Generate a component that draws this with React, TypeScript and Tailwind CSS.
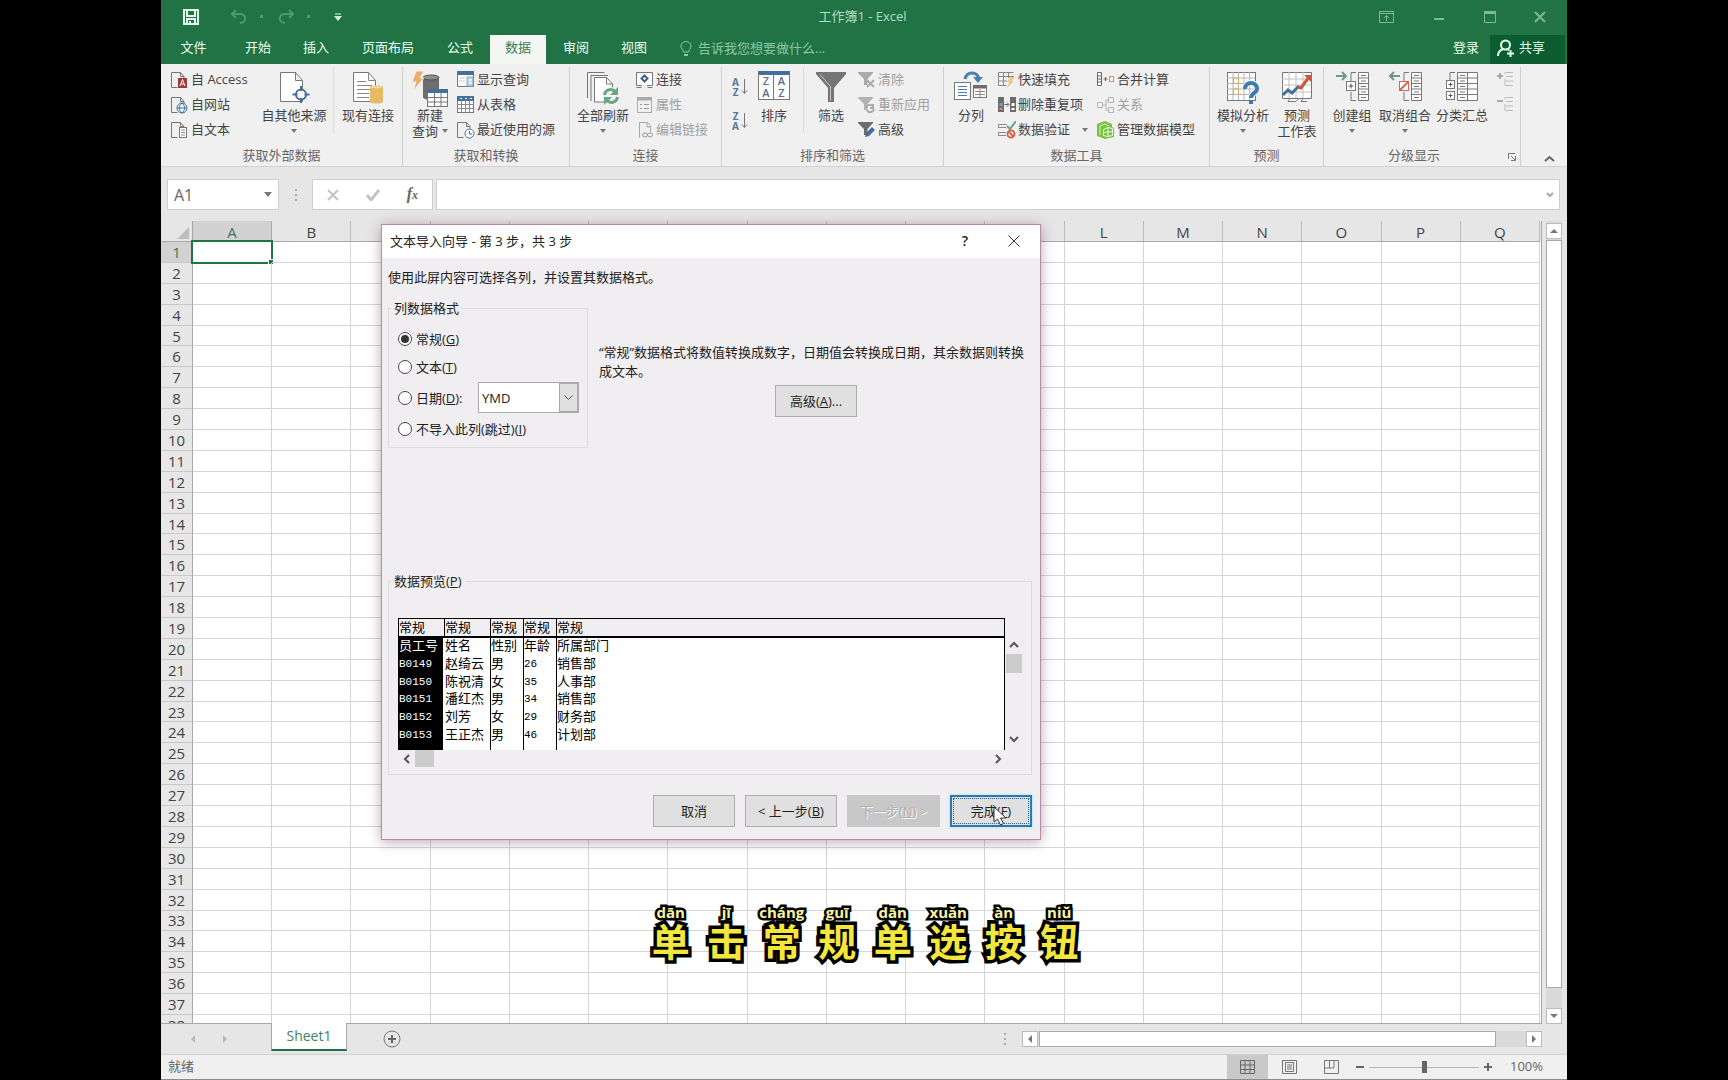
import React from "react";

type Kids = { children?: React.ReactNode };

/* ---------- icon helpers ---------- */

function Icon({ w = 18, h = 18, children }: Kids & { w?: number; h?: number }) {
  return (
    <svg width={w} height={h} viewBox={`0 0 ${w} ${h}`} fill="none" aria-hidden="true" className="block shrink-0">
      {children}
    </svg>
  );
}

function Caret() {
  return (
    <Icon w={6} h={4}>
      <path d="M0 0h6L3 4z" fill="#777" />
    </Icon>
  );
}

const SmallPage = ({ children }: Kids) => (
  <Icon>
    <path d="M9.500 1.500H0.500v15h6M9.500 1.500l3.500 4v2M9.500 1.500v4h3.500" stroke="#777" />
    {children}
  </Icon>
);

const AccessIcon = () => (
  <SmallPage>
    <rect x="7" y="7" width="9" height="10" fill="#a4373a" />
    <path d="M9 15l2.500-6.500L14 15M10 13h3" stroke="#fff" />
  </SmallPage>
);
const WebIcon = () => (
  <SmallPage>
    <circle cx="11" cy="12" r="5" fill="#eef4fa" stroke="#3e7298" />
    <path d="M6 12h10M11 7c-3.500 3-3.500 7 0 10c3.500-3 3.500-7 0-10" stroke="#3e7298" />
  </SmallPage>
);
const TextIcon = () => (
  <SmallPage>
    <rect x="8.500" y="6.500" width="7" height="10" fill="#fff" stroke="#777" />
    <path d="M10 9h4M10 11.500h4M10 14h4" stroke="#888" />
  </SmallPage>
);
const RecentIcon = () => (
  <SmallPage>
    <circle cx="12.500" cy="12.500" r="4.500" fill="#fff" stroke="#4a7296" />
    <path d="M12.500 10v3h2.500" stroke="#4a7296" />
  </SmallPage>
);
const OtherSourceIcon = () => (
  <Icon w={32} h={34}>
    <path d="M2.500 1.500h15l7 8v21h-22z" fill="#fff" stroke="#777" />
    <path d="M17.500 1.500v8h7" stroke="#777" />
    <circle cx="23" cy="23.500" r="5" fill="#fff" stroke="#44709d" strokeWidth="2" />
    <path d="M23 15v5M23 27v5M14.500 23.500h5M26.500 23.500h5" stroke="#44709d" strokeWidth="2" />
  </Icon>
);
const ExistingIcon = () => (
  <Icon w={32} h={34}>
    <path d="M1.500 1.500h15l7 8v21h-22z" fill="#fff" stroke="#777" />
    <path d="M16.500 1.500v8h7M5 10.500h9M5 14.500h15M5 18.500h13M5 22.500h12M5 26.500h12" stroke="#888" />
    <path d="M18 16c0-2 13-2 13 0v15c0 2-13 2-13 0z" fill="#e5bb66" />
    <ellipse cx="24.500" cy="16" rx="6" ry="1.500" fill="#f3d797" />
  </Icon>
);
const NewQueryIcon = () => (
  <Icon w={36} h={36}>
    <path d="M11 6h16v20c0 4-16 4-16 0z" fill="#6d6d6d" />
    <ellipse cx="19" cy="6.500" rx="8" ry="2.500" fill="#8f8f8f" stroke="#555" />
    <path d="M4 0h8L8 7h4L1 20l3-9H0z" fill="#eab06a" stroke="#f1f0f1" />
    <rect x="15.500" y="19.500" width="20" height="16" fill="#fff" stroke="#777" />
    <rect x="15" y="18" width="21" height="4" fill="#44709d" />
    <path d="M15 26.500h21M15 31h21M22.500 22v14M29 22v14" stroke="#777" />
  </Icon>
);
const ShowQueryIcon = () => (
  <Icon>
    <rect x="0.500" y="1.500" width="16" height="14" fill="#fff" stroke="#777" />
    <rect x="0" y="0" width="17" height="4" fill="#44709d" />
    <path d="M2 7h6M2 10h6" stroke="#ccc" />
    <rect x="10" y="6" width="6" height="9" fill="#c5d6e6" stroke="#8aa7c4" />
    <path d="M12 9h3M12 12h3" stroke="#fff" />
  </Icon>
);
const FromTableIcon = () => (
  <Icon>
    <rect x="0.500" y="1.500" width="16" height="15" fill="#fff" stroke="#777" />
    <rect x="0" y="0" width="17" height="5" fill="#44709d" />
    <path d="M0 8.500h17M0 12.500h17M4.500 4v12.500M8.500 4v12.500M12.500 4v12.500" stroke="#888" />
    <path d="M3 2.500h2M8 2.500h2M13 2.500h2" stroke="#fff" />
  </Icon>
);
const RefreshAllIcon = () => (
  <Icon w={34} h={34}>
    <path d="M1.500 27V1.500h17M5 30V4.500h17" stroke="#777" />
    <path d="M8.500 6.500h12l6 6.500v18h-18z" fill="#fff" stroke="#777" />
    <path d="M20.500 6.500V13h6" stroke="#777" />
    <circle cx="25" cy="25" r="9" fill="#f4f4f4" />
    <path d="M18.500 24c1-6 8-7 11-3M31.500 26c-1 6-8 7-11 3" stroke="#6aa583" strokeWidth="3" />
    <path d="M32 16v8h-8zM18 34v-8h8z" fill="#6aa583" />
  </Icon>
);
const ConnIcon = () => (
  <Icon>
    <path d="M0.500 1.500h16v13h-16z" fill="#fff" />
    <path d="M6 14.500H0.500v-13h16v13H11M0.500 16.500h5M11.500 16.500h5" stroke="#777" />
    <path d="M8.500 4.500l3 3-3 3-3-3z" fill="#fff" stroke="#3f6288" strokeWidth="2" />
  </Icon>
);
const PropIcon = () => (
  <Icon>
    <rect x="1.500" y="1.500" width="14" height="15" stroke="#aaa" />
    <path d="M1 3h15" stroke="#aaa" strokeWidth="3" />
    <path d="M4 8.500h2M8 8.500h5M4 12.500h2M8 12.500h5" stroke="#999" />
  </Icon>
);
const LinkIcon = () => (
  <Icon>
    <path d="M4 16.500H3.500v-15h8l3 3.500v6M11 2v4h4" stroke="#aaa" />
    <ellipse cx="9" cy="14" rx="2.500" ry="2" stroke="#999" />
    <ellipse cx="14" cy="14" rx="2.500" ry="2" stroke="#999" />
  </Icon>
);
function AzIcon({ top, bottom }: { top: string; bottom: string }) {
  return (
    <span className="flex items-center gap-[2px]">
      <span className="flex flex-col text-[10px] font-bold leading-[10px] text-[#55779c]">
        <span>{top}</span>
        <span>{bottom}</span>
      </span>
      <Icon w={7} h={18}>
        <path d="M3.500 1v14M1 12.500l2.500 3 2.500-3" stroke="#777" />
      </Icon>
    </span>
  );
}
const SortIcon = () => (
  <span className="grid w-8 grid-cols-2 border border-t-4 border-[#777] border-t-[#44709d] bg-white text-center text-[11px] font-semibold leading-[12px] text-[#5c6f8a]">
    <span className="border-r border-[#777]">
      Z<br />A
    </span>
    <span>
      A<br />Z
    </span>
  </span>
);
const FunnelIcon = () => (
  <Icon w={32} h={34}>
    <path d="M1 1h30v2L19 17v14h-6V17L1 3z" fill="#757575" />
    <path d="M5 3.500l10.500 12v14" stroke="#c9c9c9" />
  </Icon>
);
const funnel = "M0 1h15v1L9.500 8v6h-3.500V8L0 2z";
const ClearIcon = () => (
  <Icon>
    <path d={funnel} fill="#a9a9a9" />
    <path d="M9 9l7 7M16 9l-7 7" stroke="#aaa" strokeWidth="2" />
  </Icon>
);
const ReapplyIcon = () => (
  <Icon>
    <path d={funnel} fill="#b3b3b3" />
    <path d="M8 12c1-4 6-4 7-1M16 13c-1 4-6 4-7 1M15 8v4h-3" stroke="#aaa" strokeWidth="2" />
  </Icon>
);
const AdvIcon = () => (
  <Icon>
    <path d={funnel} fill="#6d6d6d" />
    <path d="M7 16l1-4 6-6 3 3-6 6z" fill="#44709d" />
  </Icon>
);
const SplitIcon = () => (
  <Icon w={34} h={32}>
    <path d="M11 8c2-8 12-8 14 0" stroke="#4a7fb0" strokeWidth="3" />
    <path d="M19 6h10l-5 6z" fill="#4a7fb0" />
    <rect x="0.500" y="11.500" width="16" height="17" fill="#fff" stroke="#777" />
    <path d="M4 15.500h9M4 18.500h9M4 21.500h9M4 24.500h9" stroke="#4a7fb0" />
    <rect x="19.500" y="14.500" width="13" height="12" fill="#fff" stroke="#777" />
    <path d="M19 16h14" stroke="#6d6d6d" strokeWidth="3" />
    <path d="M21 20.500h10M21 23.500h10M26 18v8" stroke="#888" />
  </Icon>
);
const FlashIcon = () => (
  <Icon>
    <path d="M15.500 1.500H0.500v13h8M0 5.500h16M0 10h9M5.500 1v13M10.500 1v6" stroke="#888" />
    <path d="M12 6h5l-3 4h2l-7 7 2-6H9z" fill="#edc98b" />
  </Icon>
);
const DedupIcon = () => (
  <Icon>
    <path d="M0 1h6v15H0zM12 1h6v15h-6z" fill="#6d6d6d" />
    <path d="M1.500 7h3v3h-3z" fill="#6fa0cc" />
    <path d="M1.500 12h3v2h-3z" fill="#dd8a5e" />
    <path d="M13.500 7h3v3h-3zM13.500 12h3v2h-3z" fill="#fff" />
    <path d="M6.500 8.500h4M9 6.500l2 2-2 2" stroke="#666" />
  </Icon>
);
const ValidIcon = () => (
  <Icon>
    <path d="M9 3.500H0.500v3H8M8 11.500H0.500v3H8" stroke="#888" />
    <path d="M9 5l3 3 6-8" stroke="#6aa583" strokeWidth="2" />
    <circle cx="13" cy="13" r="3.500" fill="#fff" stroke="#d0664a" strokeWidth="2" />
    <path d="M10.500 10.500l5 5" stroke="#d0664a" strokeWidth="2" />
  </Icon>
);
const ConsolidateIcon = () => (
  <Icon>
    <path d="M0.500 1.500h4v13h-4zM0.500 5h4M0.500 8h4M0.500 11h4" fill="#fff" stroke="#666" />
    <path d="M6.500 8h4M8.500 6v4" stroke="#666" />
    <rect x="12.500" y="5.500" width="4" height="5" fill="#fff" stroke="#d08a5c" />
  </Icon>
);
const RelationIcon = () => (
  <Icon>
    <path d="M0.500 6.500h5v5h-5zM11.500 1.500h5v5h-5zM11.500 11.500h5v5h-5zM6 9h3V4h2.500M9 9v5h2.500" stroke="#b5b5b5" />
  </Icon>
);
const ModelIcon = () => (
  <Icon>
    <path d="M0 3l8-3 7 3v3l2 1v9l-5 1-4 1-8-3z" fill="#7cc242" />
    <path d="M3 14V5l5-2 4 2" stroke="#d9f0c0" />
    <path d="M6.500 8.500l4-2 5 1v7l-5 1-4-1zM6.500 11.500l9-1M11 7v8" stroke="#eef8e4" />
  </Icon>
);
const WhatIfIcon = () => (
  <Icon w={34} h={34}>
    <rect x="1.500" y="1.500" width="28" height="28" fill="#fff" stroke="#777" />
    <path d="M7 1v28M12.500 1v28M18 1v28M23.500 1v28M1 7h28M1 12.500h28M1 18h28M1 23.500h28" stroke="#b5b5b5" />
    <path d="M7.500 7h5v5.500h-5zM7.500 18h5v5.500h-5z" stroke="#e2a75b" />
    <path d="M19 18c0-8 12-8 12 0c0 4-6 4-6 9" stroke="#f1f1f1" strokeWidth="6" />
    <path d="M19 18c0-8 12-8 12 0c0 4-6 4-6 9" stroke="#3f7cac" strokeWidth="4" />
    <path d="M23 29h4v4h-4z" fill="#3f7cac" />
  </Icon>
);
const ForecastIcon = () => (
  <Icon w={32} h={32}>
    <path d="M1.500 1.500h29v26h-29z" fill="#fff" stroke="#777" />
    <path d="M8 1v26M15 1v26M22 1v26M1 8h29M1 14h29M1 21h29" stroke="#c2c2c2" />
    <path d="M2 24l5-5 4 3 7-7" stroke="#44709d" strokeWidth="3" />
    <path d="M17 16l3 1 8-11" stroke="#c9583e" strokeWidth="3" />
    <path d="M23 4h7v7z" fill="#c9583e" />
    <path d="M2 27.500h7l-2 3h8l3-3h4l-2 3h6" stroke="#777" fill="#fff" />
  </Icon>
);
const sideTable = "M23.500 1.500h10v28h-10zM23.500 7h10M23.500 12.500h10M23.500 18h10M23.500 23.500h10";
const sideMarks = "M26 4.500h5M26 10h5M26 15.500h5M26 21h5M26 26.500h5M21 1.500h-5V10M16 21v8.500h5";
const GroupIcon = () => (
  <Icon w={34} h={32}>
    <path d={sideTable} fill="#fff" stroke="#777" />
    <path d={sideMarks} stroke="#777" />
    <rect x="11.500" y="10.500" width="9" height="9" fill="#fff" stroke="#777" />
    <path d="M13.500 15h5M16 12.500v5" stroke="#555" />
    <path d="M1 5h10M7 1l4 4-4 4" stroke="#6a9a7f" strokeWidth="2" />
  </Icon>
);
const UngroupIcon = () => (
  <Icon w={34} h={32}>
    <path d={sideTable} fill="#fff" stroke="#777" />
    <path d={sideMarks} stroke="#777" />
    <rect x="11.500" y="10.500" width="9" height="9" fill="#fff" stroke="#cf6a4f" />
    <path d="M12 19l8-8" stroke="#cf6a4f" strokeWidth="2" />
    <path d="M2 5h10M6 1L2 5l4 4" stroke="#6a9a7f" strokeWidth="2" />
  </Icon>
);
const SubtotalIcon = () => (
  <Icon w={34} h={32}>
    <path d="M12.500 1.500h20v28h-20zM12.500 7h20M12.500 12.500h20M12.500 18h20M12.500 23.500h20M22.500 1v28" fill="#fff" stroke="#777" />
    <path d="M15 4.500h5M15 10h5M15 15.500h5M15 21h5M15 26.500h5M10 1.500H5V9" stroke="#777" />
    <rect x="1.500" y="9.500" width="8" height="8" fill="#fff" stroke="#777" />
    <rect x="1.500" y="20.500" width="8" height="8" fill="#fff" stroke="#777" />
    <path d="M3.500 13.500h4M5.500 11.500v4M3.500 24.500h4M5.500 22.500v4" stroke="#555" />
  </Icon>
);
const DetailIcon = ({ plus }: { plus?: boolean }) => (
  <Icon w={16} h={16}>
    <path d="M9 1.500h7M9 5.500h7M9 10h7M9 14.500h7M8 1v2M8 8v7" stroke="#bbb" />
    <path d={plus ? "M0 5h6M3 2v6" : "M0 5h6"} stroke="#aaa" strokeWidth="2" />
  </Icon>
);

/* ---------- ribbon parts ---------- */

function Small({ icon, label, dim, arrow }: { icon: React.ReactNode; label: string; dim?: boolean; arrow?: boolean }) {
  return (
    <button type="button" className={`flex h-[25px] items-center gap-[2px] whitespace-nowrap ${dim ? "text-[#a0a0a0]" : "text-[#444]"}`}>
      {icon}
      <span>{label}</span>
      {arrow && (
        <span className="pl-[10px]">
          <Caret />
        </span>
      )}
    </button>
  );
}

function Big({ icon, label, second, arrow, width }: { icon: React.ReactNode; label: string; second?: string; arrow?: boolean; width: string }) {
  return (
    <button type="button" className={`flex shrink-0 flex-col items-center whitespace-nowrap pt-1 text-[#444] ${width}`}>
      <span className="flex h-[36px] items-start">{icon}</span>
      <span className="leading-4">{label}</span>
      <span className="flex h-4 items-center gap-1 leading-4">
        {second}
        {arrow && <Caret />}
      </span>
    </button>
  );
}

function Group({ label, width, children, launcher }: Kids & { label: string; width: string; launcher?: boolean }) {
  return (
    <section aria-label={label} className={`flex shrink-0 flex-col border-r border-[#d0d0d0] ${width}`}>
      <div className="flex h-[80px]">{children}</div>
      <div className="flex h-4 items-center text-[#666]">
        <span className="flex-1 text-center leading-4">{label}</span>
        {launcher && (
          <button type="button" aria-label="分级显示设置" className="mr-1 ml-1 pt-1">
            <Icon w={8} h={8}>
              <path d="M0.500 6V0.500H7M3 3l4 4M7.500 3v4.500H3" stroke="#777" />
            </Icon>
          </button>
        )}
      </div>
    </section>
  );
}

const Col = ({ children, width }: Kids & { width: string }) => <div className={`flex shrink-0 flex-col ${width}`}>{children}</div>;
const Rule = () => <div className="h-[66px] w-px shrink-0 bg-[#dcdcdc]" />;

function Ribbon() {
  return (
    <div className="flex h-[103px] border-b border-[#d2d2d2] bg-[#f1f0f1] pt-[3px] text-[13px]">
      <Group label="获取外部数据" width="w-[242px]">
        <Col width="w-[94px] pl-[10px]">
          <Small icon={<AccessIcon />} label="自 Access" />
          <Small icon={<WebIcon />} label="自网站" />
          <Small icon={<TextIcon />} label="自文本" />
        </Col>
        <Big width="w-[78px]" icon={<OtherSourceIcon />} label="自其他来源" arrow />
        <Rule />
        <Big width="w-[68px]" icon={<ExistingIcon />} label="现有连接" />
      </Group>
      <Group label="获取和转换" width="w-[167px]">
        <Big width="w-[54px]" icon={<NewQueryIcon />} label="新建" second="查询" arrow />
        <Col width="w-[112px]">
          <Small icon={<ShowQueryIcon />} label="显示查询" />
          <Small icon={<FromTableIcon />} label="从表格" />
          <Small icon={<RecentIcon />} label="最近使用的源" />
        </Col>
      </Group>
      <Group label="连接" width="w-[152px]">
        <Big width="w-[66px]" icon={<RefreshAllIcon />} label="全部刷新" arrow />
        <Col width="w-[86px]">
          <Small icon={<ConnIcon />} label="连接" />
          <Small icon={<PropIcon />} label="属性" dim />
          <Small icon={<LinkIcon />} label="编辑链接" dim />
        </Col>
      </Group>
      <Group label="排序和筛选" width="w-[222px]">
        <div className="flex w-8 shrink-0 flex-col items-end gap-[14px] pt-[10px] pr-[6px]">
          <button type="button" aria-label="升序">
            <AzIcon top="A" bottom="Z" />
          </button>
          <button type="button" aria-label="降序">
            <AzIcon top="Z" bottom="A" />
          </button>
        </div>
        <Big width="w-[40px]" icon={<SortIcon />} label="排序" />
        <div className="w-[9px]" />
        <Rule />
        <Big width="w-[54px]" icon={<FunnelIcon />} label="筛选" />
        <Col width="w-[84px]">
          <Small icon={<ClearIcon />} label="清除" dim />
          <Small icon={<ReapplyIcon />} label="重新应用" dim />
          <Small icon={<AdvIcon />} label="高级" />
        </Col>
      </Group>
      <Group label="数据工具" width="w-[266px]">
        <Big width="w-[54px]" icon={<SplitIcon />} label="分列" />
        <Col width="w-[99px]">
          <Small icon={<FlashIcon />} label="快速填充" />
          <Small icon={<DedupIcon />} label="删除重复项" />
          <Small icon={<ValidIcon />} label="数据验证" arrow />
        </Col>
        <Col width="w-[112px]">
          <Small icon={<ConsolidateIcon />} label="合并计算" />
          <Small icon={<RelationIcon />} label="关系" dim />
          <Small icon={<ModelIcon />} label="管理数据模型" />
        </Col>
      </Group>
      <Group label="预测" width="w-[114px]">
        <Big width="w-[66px]" icon={<WhatIfIcon />} label="模拟分析" arrow />
        <Big width="w-[42px]" icon={<ForecastIcon />} label="预测" second="工作表" />
      </Group>
      <Group label="分级显示" width="w-[197px]" launcher>
        <Big width="w-[56px]" icon={<GroupIcon />} label="创建组" arrow />
        <Big width="w-[50px]" icon={<UngroupIcon />} label="取消组合" arrow />
        <Big width="w-[64px]" icon={<SubtotalIcon />} label="分类汇总" />
        <div className="flex flex-col gap-[9px] pt-1 pl-[3px]">
          <button type="button" aria-label="显示明细数据">
            <DetailIcon plus />
          </button>
          <button type="button" aria-label="隐藏明细数据">
            <DetailIcon />
          </button>
        </div>
      </Group>
      <div className="flex flex-1 items-end justify-end pr-[12px] pb-1">
        <button type="button" aria-label="折叠功能区">
          <Icon w={11} h={7}>
            <path d="M1 6l4.500-4L10 6" stroke="#666" strokeWidth="2" />
          </Icon>
        </button>
      </div>
    </div>
  );
}

/* ---------- title bar and tabs ---------- */

function TitleBar() {
  return (
    <header className="grid h-[35px] grid-cols-[1fr_auto_1fr] items-center pb-[2px] text-[13px]">
      <div className="flex items-center pl-[22px]">
        <button type="button" aria-label="保存">
          <Icon w={16} h={16}>
            <path d="M1 1h14v14H1z" stroke="#e3ffed" strokeWidth="2" />
            <path d="M4 1v6h8V1M4 15v-5h8v5M7 12v3" stroke="#e3ffed" strokeWidth="2" />
          </Icon>
        </button>
        <div className="flex items-center gap-[13px] pl-8 text-[#4f9870]">
          <button type="button" aria-label="撤消">
            <Icon w={16} h={16}>
              <path d="M5 1L1 5l4 4M1 5h8c7 0 7 9 0 9" stroke="currentColor" strokeWidth="2" />
            </Icon>
          </button>
          <span className="h-[3px] w-[3px] bg-[#4f9870]" />
          <button type="button" aria-label="恢复" className="pl-[2px]">
            <Icon w={16} h={16}>
              <path d="M11 1l4 4-4 4M15 5H7C0 5 0 14 7 14" stroke="currentColor" strokeWidth="2" />
            </Icon>
          </button>
          <span className="h-[3px] w-[3px] bg-[#4f9870]" />
        </div>
        <button type="button" aria-label="自定义快速访问工具栏" className="pl-6">
          <Icon w={8} h={8}>
            <path d="M1 1h6" stroke="#d6f3e1" />
            <path d="M0 3h8L4 8z" fill="#d6f3e1" />
          </Icon>
        </button>
      </div>
      <h1 className="pr-[3px] text-[#b4dcc3]">工作簿1 - Excel</h1>
      <div className="flex items-center justify-end gap-[38px] pr-[21px] text-[#7fb896]">
        <button type="button" aria-label="功能区显示选项">
          <Icon w={15} h={12}>
            <path d="M0.500 0.500h14v11H0.500zM0 2.500h15M7.500 10V5M5 7l2.500-2.500L10 7" stroke="currentColor" />
          </Icon>
        </button>
        <button type="button" aria-label="最小化" className="px-[2px]">
          <Icon w={10} h={10}>
            <path d="M0 7h10" stroke="currentColor" strokeWidth="2" />
          </Icon>
        </button>
        <button type="button" aria-label="最大化">
          <Icon w={12} h={12}>
            <path d="M0.500 1v10.500h11V1zM0 2h12" stroke="currentColor" />
            <path d="M0 1.500h12" stroke="currentColor" strokeWidth="3" />
          </Icon>
        </button>
        <button type="button" aria-label="关闭">
          <Icon w={12} h={12}>
            <path d="M1 1l10 10M11 1L1 11" stroke="currentColor" strokeWidth="2" />
          </Icon>
        </button>
      </div>
    </header>
  );
}

const tabs = ["开始", "插入", "页面布局", "公式", "数据", "审阅", "视图"];

function Tabs() {
  return (
    <nav className="flex h-[29px] text-[13px] text-[#eafff1]">
      <button type="button" className="mr-1 w-[65px] pb-1">
        文件
      </button>
      <div className="flex gap-[2px]">
        {tabs.map((t) => (
          <button
            key={t}
            type="button"
            className={`pb-1 ${t.length > 2 ? "w-[84px]" : "w-14"} ${t === "数据" ? "bg-[#f3f6f3] text-[#35805a]" : ""}`}
          >
            {t}
          </button>
        ))}
      </div>
      <button type="button" className="flex items-center gap-[6px] pb-px pl-[18px] text-[#8cc7a3]">
        <Icon w={12} h={16}>
          <path d="M3.500 11C3.500 9 1 8 1 5a5 4.500 0 0 1 10 0c0 3-2.500 4-2.500 6zM4 14h4" stroke="currentColor" strokeWidth="1" />
          <path d="M4 13h4v2H4z" fill="currentColor" />
        </Icon>
        告诉我您想要做什么...
      </button>
      <div className="flex-1" />
      <button type="button" className="px-[11px] pb-1">
        登录
      </button>
      <button type="button" className="mr-[2px] flex w-[75px] items-center gap-1 bg-[#0c5c31] pb-[4px] pl-[7px]">
        <Icon w={18} h={18}>
          <circle cx="8.500" cy="6" r="4.500" stroke="currentColor" strokeWidth="2" />
          <path d="M1 17c0-4 2-6 5-7M10 10l2 1M13.500 11v7M10 14.500h7" stroke="currentColor" strokeWidth="2" />
        </Icon>
        共享
      </button>
    </nav>
  );
}

function Grip() {
  return (
    <>
      <i className="h-[2px] w-[2px] bg-[#aaa]" />
      <i className="h-[2px] w-[2px] bg-[#aaa]" />
      <i className="h-[2px] w-[2px] bg-[#aaa]" />
    </>
  );
}

function FormulaBar() {
  return (
    <div className="flex h-[43px] items-start pt-3 pr-[7px] pl-[6px]">
      <div className="flex h-[31px] w-[112px] items-center border border-[#cfcfcf] bg-white px-[6px]">
        <input aria-label="名称框" defaultValue="A1" className="w-0 flex-1 text-[16px] leading-6 text-[#666] outline-none" />
        <button type="button" aria-label="名称列表">
          <Icon w={8} h={5}>
            <path d="M0 0h8L4 5z" fill="#777" />
          </Icon>
        </button>
      </div>
      <div className="flex h-[31px] w-[33px] flex-col items-center justify-center gap-[3px]">
        <Grip />
      </div>
      <div className="flex h-[31px] w-[121px] items-center justify-between border border-[#cfcfcf] bg-white px-[14px]">
        <button type="button" aria-label="取消输入">
          <Icon w={12} h={12}>
            <path d="M1 1l10 10M11 1L1 11" stroke="#c4c4c4" strokeWidth="2" />
          </Icon>
        </button>
        <button type="button" aria-label="输入">
          <Icon w={14} h={12}>
            <path d="M1 6l4 5L13 1" stroke="#c4c4c4" strokeWidth="3" />
          </Icon>
        </button>
        <button type="button" aria-label="插入函数" className="font-['Liberation_Serif',serif] text-[16px] font-bold italic leading-4 text-[#666]">
          f<span className="text-[12px]">x</span>
        </button>
      </div>
      <div className="ml-[3px] flex h-[31px] flex-1 items-center border border-[#cfcfcf] bg-white pr-[5px]">
        <input aria-label="编辑栏" className="h-full flex-1 px-2 text-[15px] outline-none" />
        <button type="button" aria-label="展开编辑栏">
          <Icon w={8} h={6}>
            <path d="M1 1l3 3 3-3" stroke="#aaa" strokeWidth="2" />
          </Icon>
        </button>
      </div>
    </div>
  );
}

/* ---------- sheet ---------- */

const columns = "ABCDEFGHIJKLMNOPQ".split("");
const rows = Array.from({ length: 38 }, (_, i) => i + 1);

function Arrow({ d }: { d: string }) {
  return (
    <Icon w={10} h={10}>
      <path d={d} fill="#777" />
    </Icon>
  );
}
const UP = "M1 7h8L5 3z";
const DOWN = "M1 3h8L5 7z";
const LEFT = "M7 1v8L3 5z";
const RIGHT = "M3 1v8l4-4z";

function Sheet() {
  return (
    <div className="flex min-h-0 flex-1 pt-[11px]">
      <div className="min-w-0 flex-1 overflow-hidden border-r border-b border-[#a8a8a8]">
        <div className="bg-[linear-gradient(#e6e6e6_21px,#fff_21px)]">
          <table className="h-[815px] w-[calc(100%-1px)] table-fixed border-separate border-spacing-0">
            <thead>
              <tr className="h-[21px]">
                <th className="w-8 border-r border-b border-[#a8a8a8] bg-[#e6e6e6] p-0" aria-label="全选">
                  <span className="flex justify-end pt-1 pr-[3px]">
                    <Icon w={12} h={12}>
                      <path d="M12 0v12H0z" fill="#bdbdbd" />
                    </Icon>
                  </span>
                </th>
                {columns.map((c) => (
                  <th
                    key={c}
                    scope="col"
                    className={`border-r border-b p-0 align-bottom text-[15px] font-normal leading-[18px] ${
                      c === "A" ? "border-r-[#aaa] border-b-[#217346] bg-[#d2d2d2] text-[#3d7558]" : "border-r-[#bcbcbc] border-b-[#a8a8a8] bg-[#e6e6e6] text-[#444]"
                    }`}
                  >
                    {c}
                  </th>
                ))}
              </tr>
            </thead>
            <tbody>
              {rows.map((r) => (
                <tr key={r}>
                  <th
                    scope="row"
                    className={`border-r border-b border-r-[#a8a8a8] border-b-[#c8c8c8] p-0 text-[15px] font-normal leading-[18px] ${
                      r === 1 ? "bg-[#d2d2d2] text-[#3d7558]" : "bg-[#e8e7e8] text-[#444]"
                    }`}
                  >
                    {r}
                  </th>
                  {columns.map((c) => (
                    <td key={c} className="relative border-r border-b border-[#d6d4d8] p-0">
                      {r === 1 && c === "A" && (
                        <>
                          <span className="absolute -inset-[2px] border-2 border-[#217346]" />
                          <span className="absolute -right-[3px] -bottom-[3px] h-[6px] w-[6px] border border-white bg-[#217346]" />
                        </>
                      )}
                    </td>
                  ))}
                </tr>
              ))}
            </tbody>
          </table>
        </div>
      </div>
      <div className="ml-1 mr-[5px] flex w-4 flex-col bg-[#dadada] pt-[2px]">
        <button type="button" aria-label="向上滚动" className="flex h-4 items-center justify-center border border-[#bbb] bg-white">
          <Arrow d={UP} />
        </button>
        <div className="mt-px h-[748px] border border-[#aaa] bg-white" />
        <div className="flex-1" />
        <button type="button" aria-label="向下滚动" className="flex h-4 items-center justify-center border border-[#bbb] bg-white">
          <Arrow d={DOWN} />
        </button>
      </div>
    </div>
  );
}

function SheetTabs() {
  return (
    <div className="flex h-[31px] shrink-0 items-start border-b border-[#d2d2d2]">
      <div className="flex h-[30px] w-[110px] items-center gap-[22px] pl-[27px] opacity-40">
        <button type="button" aria-label="上一个工作表">
          <Arrow d={LEFT} />
        </button>
        <button type="button" aria-label="下一个工作表">
          <Arrow d={RIGHT} />
        </button>
      </div>
      <button type="button" className="-mt-px h-[28px] w-[76px] border-x border-b-2 border-[#a8a8a8] border-b-[#217346] bg-white text-[14px] leading-6 text-[#3d8560]">
        Sheet1
      </button>
      <button type="button" aria-label="新工作表" className="ml-9 flex h-[30px] items-center">
        <Icon w={18} h={18}>
          <circle cx="9" cy="9" r="8" stroke="#777" />
          <path d="M9 5v8M5 9h8" stroke="#666" strokeWidth="2" />
        </Icon>
      </button>
      <div className="flex-1" />
      <div className="flex h-[30px] w-[34px] flex-col items-center justify-center gap-[3px]">
        <Grip />
      </div>
      <div className="mt-[7px] mr-[25px] flex h-4 w-[37%] bg-[#dadada]">
        <button type="button" aria-label="向左滚动" className="flex w-4 items-center justify-center border border-[#bbb] bg-white">
          <Arrow d={LEFT} />
        </button>
        <div className="ml-px flex-1 border border-[#aaa] bg-white" />
        <div className="w-[30px]" />
        <button type="button" aria-label="向右滚动" className="flex w-4 items-center justify-center border border-[#bbb] bg-white">
          <Arrow d={RIGHT} />
        </button>
      </div>
    </div>
  );
}

function StatusBar() {
  return (
    <footer className="flex h-[25px] shrink-0 items-center border-b border-[#8c8c8c] bg-[#f1f0f1] text-[13px] text-[#666]">
      <span className="flex-1 pl-[7px]">就绪</span>
      <button type="button" aria-label="普通" className="flex h-full w-[41px] items-center justify-center bg-[#c9c9c9]">
        <Icon w={15} h={14}>
          <path d="M0.500 0.500h14v13H0.500zM5 0v14M10 0v14M0 5h15M0 9.500h15" stroke="#666" />
        </Icon>
      </button>
      <button type="button" aria-label="页面布局" className="flex h-full w-[43px] items-center justify-center">
        <Icon w={15} h={14}>
          <path d="M0.500 0.500h14v13H0.500zM3.500 2.500h8v9h-8zM5 5h5M5 7h5M5 9h5" stroke="#777" />
        </Icon>
      </button>
      <button type="button" aria-label="分页预览" className="flex h-full w-[41px] items-center justify-center">
        <Icon w={15} h={14}>
          <path d="M0.500 0.500h14v13H0.500zM5.500 0v8M10 0v8M0 8h10" stroke="#777" />
        </Icon>
      </button>
      <button type="button" aria-label="缩小" className="ml-1">
        <Icon w={8} h={8}>
          <path d="M0 4h8" stroke="#666" strokeWidth="2" />
        </Icon>
      </button>
      <input
        type="range"
        aria-label="显示比例"
        defaultValue={50}
        className="mx-[5px] h-3 w-[110px] appearance-none bg-[linear-gradient(#b5b5b5,#b5b5b5)] bg-[length:100%_1px] bg-center bg-no-repeat [&::-webkit-slider-thumb]:h-3 [&::-webkit-slider-thumb]:w-[5px] [&::-webkit-slider-thumb]:appearance-none [&::-webkit-slider-thumb]:bg-[#666]"
      />
      <button type="button" aria-label="放大">
        <Icon w={8} h={8}>
          <path d="M0 4h8M4 0v8" stroke="#666" strokeWidth="2" />
        </Icon>
      </button>
      <span className="mr-6 w-[51px] text-right">100%</span>
    </footer>
  );
}

/* ---------- import wizard ---------- */

function Radio({ children, id, checked, gap }: Kids & { id: string; checked?: boolean; gap: string }) {
  return (
    <div className={`flex items-center gap-1 ${gap}`}>
      <input
        type="radio"
        name="format"
        id={id}
        defaultChecked={checked}
        className="h-[14px] w-[14px] appearance-none rounded-full border border-[#444] bg-white checked:border-[3px] checked:border-white checked:bg-[#333] checked:outline checked:-outline-offset-1 checked:outline-[#444]"
      />
      <label htmlFor={id}>{children}</label>
    </div>
  );
}

const preview = [
  ["员工号", "姓名", "性别", "年龄", "所属部门"],
  ["B0149", "赵绮云", "男", "26", "销售部"],
  ["B0150", "陈祝清", "女", "35", "人事部"],
  ["B0151", "潘红杰", "男", "34", "销售部"],
  ["B0152", "刘芳", "女", "29", "财务部"],
  ["B0153", "王正杰", "男", "46", "计划部"],
];

const btn = "h-[32px] border border-[#adadad] bg-[#e1e0e1]";

function Chevron({ d }: { d: string }) {
  return (
    <Icon w={10} h={10}>
      <path d={d} stroke="#555" strokeWidth="2" />
    </Icon>
  );
}

function Wizard() {
  return (
    <div
      role="dialog"
      aria-label="文本导入向导"
      className="absolute top-[224px] left-[220px] w-[660px] border border-[#b98aa2] bg-[#f0eef0] text-[13px] leading-5 text-[#222] shadow-[0_2px_12px_rgba(90,40,60,0.4)]"
    >
      <div className="flex h-[33px] items-center bg-white pb-[2px] pl-[8px]">
        <h2 className="flex-1">文本导入向导 - 第 3 步，共 3 步</h2>
        <button type="button" aria-label="帮助" className="w-5 text-[14px] font-semibold">
          ?
        </button>
        <button type="button" aria-label="关闭" className="ml-[33px] mr-5">
          <Icon w={12} h={12}>
            <path d="M0.500 0.500l11 11M11.500 0.500l-11 11" stroke="#333" />
          </Icon>
        </button>
      </div>
      <div className="pt-[9px] pr-[8px] pb-[12px] pl-[6px]">
        <p>使用此屏内容可选择各列，并设置其数据格式。</p>
        <div className="mt-[11px] flex items-start">
          <fieldset className="h-[150px] w-[200px] border border-[#dcdadc] pl-[9px]">
            <legend className="-ml-[7px] px-[3px]">列数据格式</legend>
            <Radio id="general" checked gap="mt-[11px]">
              常规(<u>G</u>)
            </Radio>
            <Radio id="text" gap="mt-[8px]">
              文本(<u>T</u>)
            </Radio>
            <div className="mt-[5px] flex items-center">
              <Radio id="date" gap="w-[80px]">
                日期(<u>D</u>):
              </Radio>
              <div className="flex h-[31px] w-[101px] border border-[#aaa] bg-white">
                <select aria-label="日期格式" className="w-0 flex-1 appearance-none pl-[3px] outline-none">
                  <option>YMD</option>
                  <option>MDY</option>
                  <option>DMY</option>
                </select>
                <span className="flex w-[19px] items-center justify-center border border-[#aaa] bg-[#e1e0e1]">
                  <Icon w={9} h={6}>
                    <path d="M0.500 0.500l4 4 4-4" stroke="#555" />
                  </Icon>
                </span>
              </div>
            </div>
            <Radio id="skip" gap="mt-[6px]">
              不导入此列(跳过)(<u>I</u>)
            </Radio>
          </fieldset>
          <div className="flex-1 pt-[45px] pl-[11px]">
            <p className="leading-[19px]">“常规”数据格式将数值转换成数字，日期值会转换成日期，其余数据则转换成文本。</p>
            <button type="button" className={`mt-[4px] ml-[176px] w-[82px] ${btn}`}>
              高级(<u>A</u>)...
            </button>
          </div>
        </div>
        <fieldset className="mt-[123px] border border-[#dcdadc] px-[9px]">
          <legend className="-ml-[7px] px-[3px]">
            数据预览(<u>P</u>)
          </legend>
          <div className="mt-[27px] flex">
            <div className="h-[132px] flex-1 overflow-hidden border border-b-0 border-black bg-white font-['Liberation_Mono','Noto_Sans_CJK_SC',monospace] text-black">
              <table className="h-[150px] w-full table-fixed border-separate border-spacing-0 text-left">
                <thead>
                  <tr className="h-[19px] bg-[#f0eef0]">
                    {preview[0].map((h, i) => (
                      <th
                        key={h}
                        className={`border-b-2 border-black p-0 align-bottom text-[13px] font-normal leading-[14px] ${
                          i === 4 ? "" : i < 2 ? "w-[46px] border-r" : "w-[33px] border-r"
                        }`}
                      >
                        常规
                      </th>
                    ))}
                  </tr>
                </thead>
                <tbody>
                  {preview.map((r) => (
                    <tr key={r[0]}>
                      {r.map((v, i) => (
                        <td
                          key={i}
                          className={`whitespace-nowrap p-0 leading-[17px] ${/^[B\d]/.test(v) ? "text-[11px]" : "text-[13px]"} ${
                            i === 0 ? "border-r-2 border-white bg-black text-white" : i < 4 ? "border-r border-black" : ""
                          }`}
                        >
                          {v}
                        </td>
                      ))}
                    </tr>
                  ))}
                  <tr className="h-[25px]">
                    <td className="border-r-2 border-white bg-black p-0" />
                    <td className="border-r border-black p-0" />
                    <td className="border-r border-black p-0" />
                    <td className="border-r border-black p-0" />
                    <td className="p-0" />
                  </tr>
                </tbody>
              </table>
            </div>
            <div className="flex w-[17px] flex-col items-center pt-[22px]">
              <Chevron d="M1 7l4-4 4 4" />
              <div className="mt-1 h-[19px] w-4 bg-[#cdcccd]" />
              <div className="flex-1" />
              <Chevron d="M1 3l4 4 4-4" />
              <div className="h-[6px]" />
            </div>
          </div>
          <div className="mr-[19px] mb-[7px] flex h-[17px] items-center pl-1">
            <Chevron d="M7 1L3 5l4 4" />
            <div className="ml-[3px] h-[17px] w-[19px] bg-[#cdcccd]" />
            <div className="flex-1" />
            <Chevron d="M3 1l4 4-4 4" />
          </div>
        </fieldset>
        <div className="mt-5 flex justify-end">
          <button type="button" className={`w-[82px] ${btn}`}>
            取消
          </button>
          <button type="button" className={`ml-[10px] w-[92px] ${btn}`}>
            &lt; 上一步(<u>B</u>)
          </button>
          <button
            type="button"
            disabled
            className="ml-[10px] h-[32px] w-[93px] bg-[#c9c8c9] text-[#b0b0b0] [text-shadow:1px_1px_0_#f5f5f5]"
          >
            下一步(<u>N</u>) &gt;
          </button>
          <button
            type="button"
            className="relative ml-[10px] h-[32px] w-[82px] border-2 border-[#2f77ac] bg-[#e1e0e1] shadow-[0_0_2px_1px_#bfe6fa] outline-1 -outline-offset-4 outline-dotted outline-[#2f5f8c]"
          >
            完成(<u>F</u>)
            <span className="absolute top-[9px] left-[41px]">
              <Icon w={15} h={20}>
                <path d="M1 1v15l3.500-3 3 6 3-1.500-3-5.500H13z" fill="#fff" stroke="#333" />
              </Icon>
            </span>
          </button>
        </div>
      </div>
    </div>
  );
}

/* ---------- subtitle ---------- */

const caption = [
  ["单", "dān"],
  ["击", "jī"],
  ["常", "cháng"],
  ["规", "guī"],
  ["单", "dān"],
  ["选", "xuǎn"],
  ["按", "àn"],
  ["钮", "niǔ"],
];

function Caption() {
  return (
    <div className="absolute top-[902px] left-[482px] grid w-[444px] grid-cols-8 text-center [paint-order:stroke_fill] [stroke-linejoin:round]">
      {caption.map(([han, py], i) => (
        <div key={i} className="flex flex-col items-center font-bold">
          <span className="text-[15px] leading-5 text-[#f7f3a0] [-webkit-text-stroke:5px_#000]">{py}</span>
          <span className="text-[38px] leading-[38px] text-[#f3e63c] [-webkit-text-stroke:7px_#000]">{han}</span>
        </div>
      ))}
    </div>
  );
}

export default function App() {
  return (
    <div className="h-screen overflow-hidden bg-black px-[161px] font-['Open_Sans','Noto_Sans_CJK_SC',sans-serif]">
      <main className="relative flex h-full flex-col bg-[#e6e6e6]">
        <div className="bg-[#217346]">
          <TitleBar />
          <Tabs />
        </div>
        <Ribbon />
        <FormulaBar />
        <Sheet />
        <SheetTabs />
        <StatusBar />
        <Wizard />
        <Caption />
      </main>
    </div>
  );
}
